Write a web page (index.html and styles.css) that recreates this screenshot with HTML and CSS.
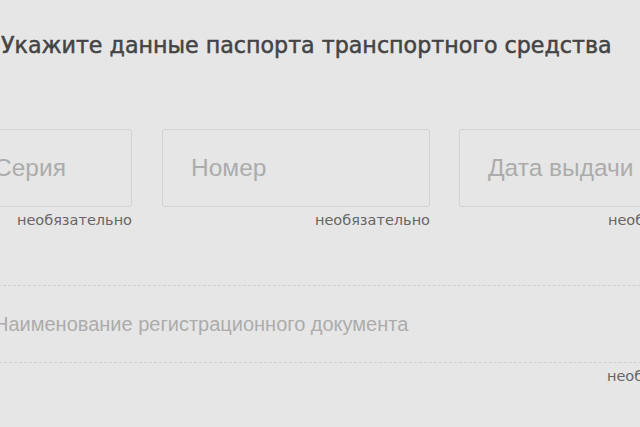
FILE: index.html
```html
<!DOCTYPE html>
<html lang="ru">
<head>
<meta charset="utf-8">
<link rel="stylesheet" href="styles.css">
</head>
<body>
<div class="page">
  <h1 class="title">Укажите данные паспорта транспортного средства</h1>
  <div class="row row-three">
    <div class="field-wrap">
      <div class="field"><span class="placeholder">Серия</span></div>
      <div class="hint">необязательно</div>
    </div>
    <div class="field-wrap">
      <div class="field"><span class="placeholder">Номер</span></div>
      <div class="hint">необязательно</div>
    </div>
    <div class="field-wrap">
      <div class="field"><span class="placeholder">Дата выдачи</span></div>
      <div class="hint">необязательно</div>
    </div>
  </div>
  <div class="row row-one">
    <div class="field-wrap">
      <div class="field field-wide"><span class="placeholder placeholder-wide">Наименование регистрационного документа</span></div>
      <div class="hint">необязательно</div>
    </div>
  </div>
</div>
</body>
</html>
```

FILE: styles.css
```css
html, body {
  margin: 0;
  padding: 0;
  background: #e6e6e6;
  overflow: hidden;
}
.page {
  width: 640px;
  height: 427px;
  overflow: hidden;
  font-family: "Liberation Sans", Arial, sans-serif;
}
.title {
  margin: 0;
  padding: 31px 0 0 1px;
  font-family: "DejaVu Sans", sans-serif;
  font-weight: 400;
  font-size: 22.2px;
  line-height: 28px;
  color: #444444;
  -webkit-text-stroke: 0.5px #444444;
  white-space: nowrap;
}
.row {
  display: grid;
  margin-left: -35px;
  width: 757px;
}
.row-three {
  margin-top: 70px;
  grid-template-columns: 167px 268px 263px;
  column-gap: 30px;
}
.row-three .field-wrap:last-child {
  margin-left: -1px;
}
.row-one {
  margin-top: 57px;
  grid-template-columns: 1fr;
}
.field {
  height: 76px;
  border: 1px solid #d3d3d3;
  border-radius: 3px;
  display: flex;
  align-items: center;
  padding-left: 28px;
}
.field-wide {
  border-style: dashed;
  border-color: #d0d0d0;
}
.placeholder {
  font-size: 24.5px;
  color: #acacac;
  white-space: nowrap;
}
.placeholder-wide {
  font-size: 20px;
}
.hint {
  text-align: right;
  font-family: "DejaVu Sans", sans-serif;
  font-size: 14.5px;
  line-height: 16px;
  margin-top: 5px;
  color: #666666;
  white-space: nowrap;
}
```
